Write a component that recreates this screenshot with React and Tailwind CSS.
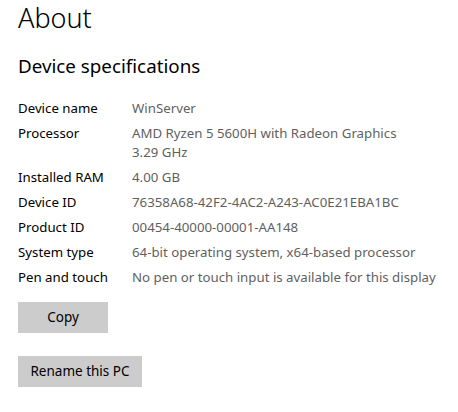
const specs = [
  ['Device name', ['WinServer']],
  ['Processor', ['AMD Ryzen 5 5600H with Radeon Graphics', '3.29 GHz']],
  ['Installed RAM', ['4.00 GB']],
  ['Device ID', ['76358A68-42F2-4AC2-A243-AC0E21EBA1BC']],
  ['Product ID', ['00454-40000-00001-AA148']],
  ['System type', ['64-bit operating system, x64-based processor']],
  ['Pen and touch', ['No pen or touch input is available for this display']],
]

export default function App() {
  return (
    <div className="w-[458px] h-[412px] bg-white overflow-hidden font-['Noto_Sans',sans-serif] text-black">
      <div className="pl-[18px]">
        <h1 className="text-[27px] leading-[36px] font-light -mb-[2px]">About</h1>
        <h2 className="mt-[19px] text-[18.8px] leading-[26px]">Device specifications</h2>

        <div className="mt-[20px] flex flex-col gap-[6px] text-[13.25px] leading-[19px]">
          {specs.map(([label, lines]) => (
            <div key={label} className="flex">
              <div className="w-[114px] shrink-0">{label}</div>
              <div className="text-[#5f5f5f]">
                {lines.map((l) => (
                  <div key={l}>{l}</div>
                ))}
              </div>
            </div>
          ))}
        </div>

        <button className="mt-[15px] w-[90px] h-[31px] bg-[#cccccc] text-[13.5px]">Copy</button>
        <div>
          <button className="mt-[23px] w-[124px] h-[31px] bg-[#cccccc] text-[13.5px]">Rename this PC</button>
        </div>
      </div>
    </div>
  )
}
